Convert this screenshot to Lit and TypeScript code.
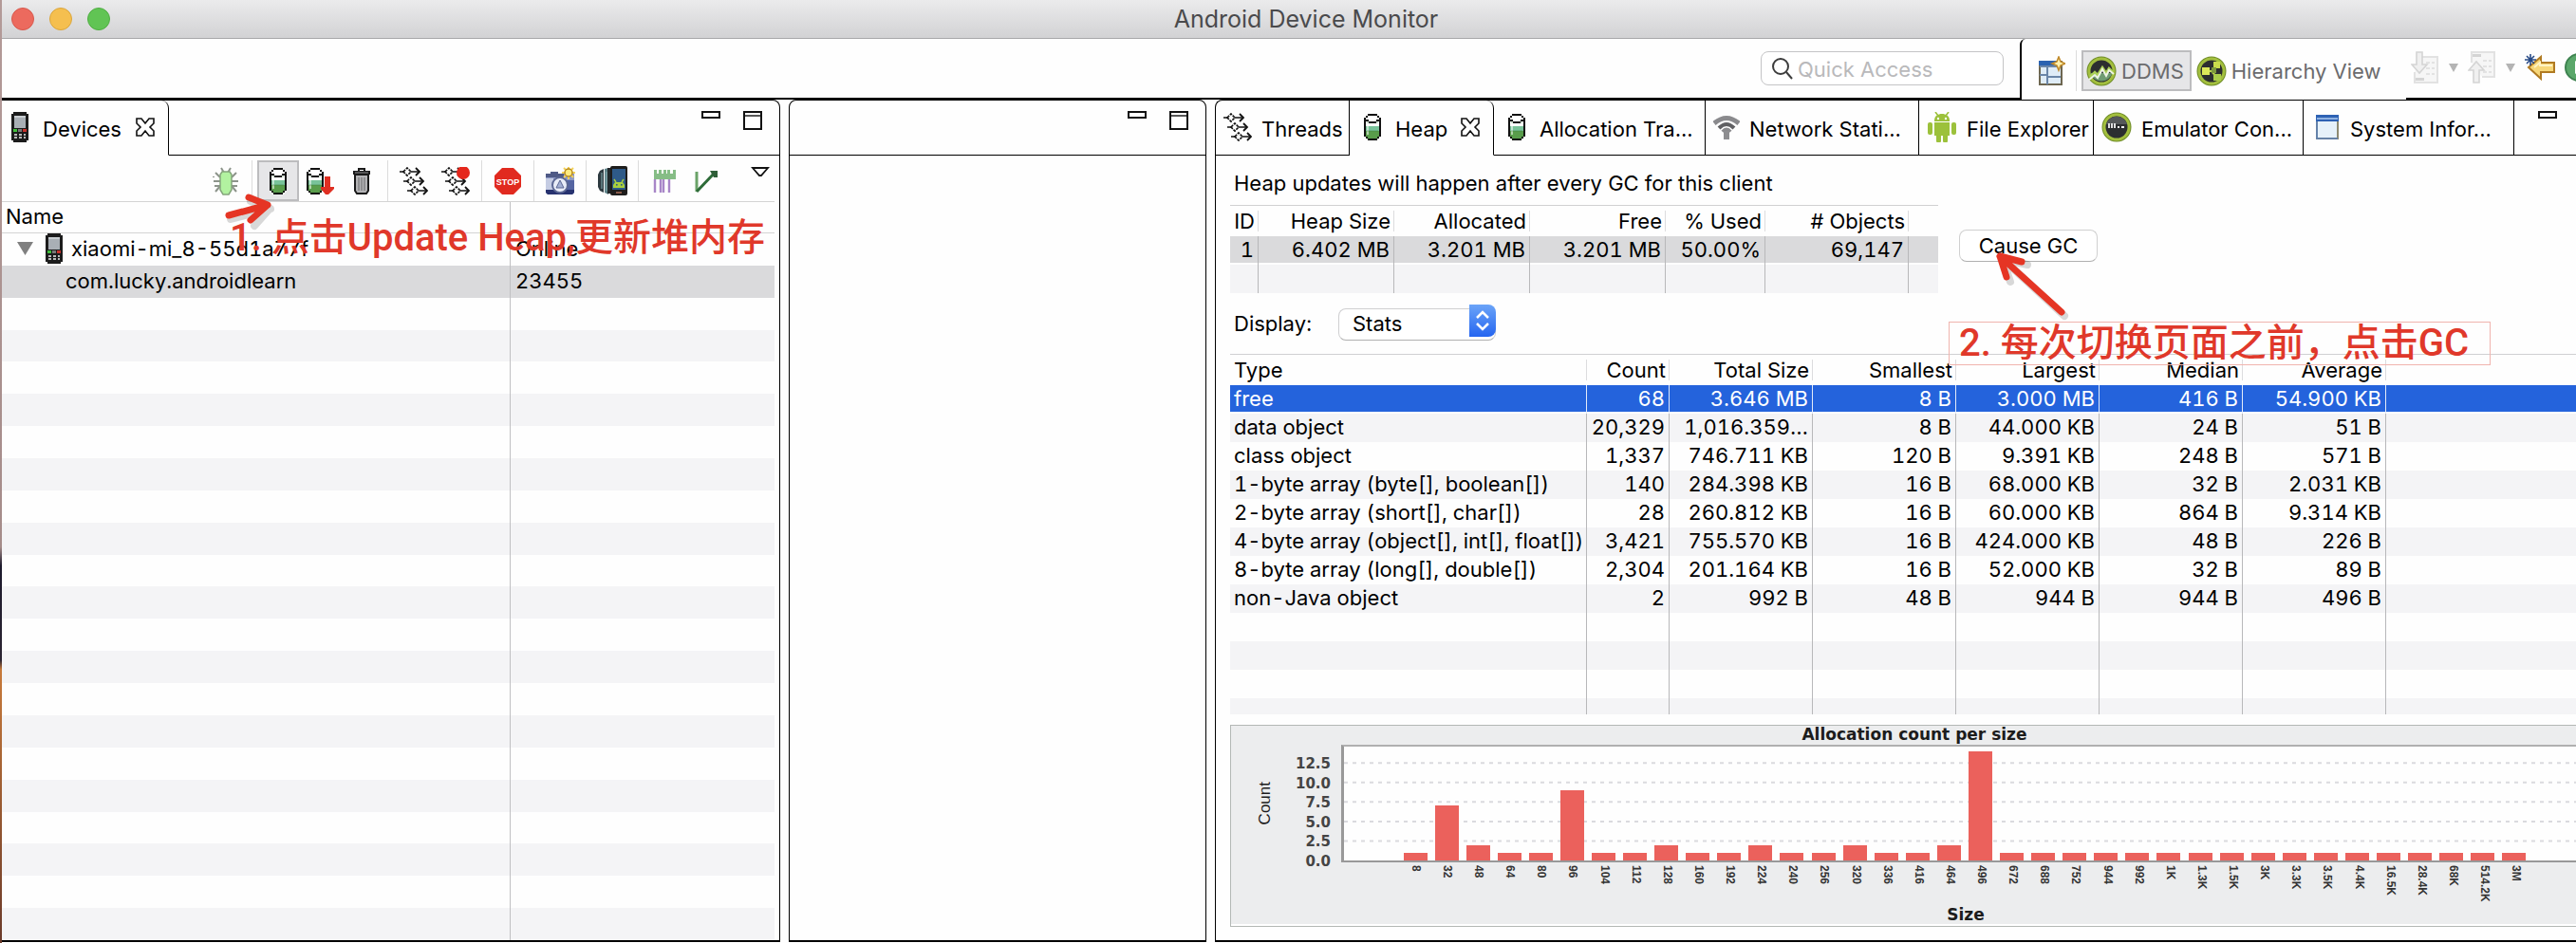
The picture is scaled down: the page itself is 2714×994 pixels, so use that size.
import { LitElement, html, css, svg, nothing } from "lit";
import { customElement } from "lit/decorators.js";
import { classMap } from "lit/directives/class-map.js";

/* ---------- icons ---------- */

const phoneIcon = html`<svg class="ico" width="18" height="32" viewBox="0 0 18 32" aria-hidden="true">
  <path d="M2 0h14v2h2v28h-2v2H2v-2H0V2h2z" fill="#1c1c1c"/>
  <rect x="3" y="4" width="12" height="13" fill="#a9afb5"/>
  <rect x="3" y="4" width="12" height="2" fill="#c9ced2"/>
  <rect x="2" y="18" width="4" height="3" fill="#3fbf3a"/><rect x="7" y="18" width="4" height="3" fill="#777"/>
  <rect x="12" y="18" width="4" height="3" fill="#c8302a"/>
  <path d="M3 23h3v2H3zm5 0h3v2H8zm5 0h2v2h-2zM3 26h3v2H3zm5 0h3v2H8zm5 0h2v2h-2z" fill="#b9b9b9"/>
</svg>`;

const heapShape = svg`
  <path d="M4 2h12l3 3v19l-3 4H4l-3-4V5z" fill="#fff"/>
  <path d="M3 13h14v5H3z" fill="#79c39a"/>
  <path d="M3 18h14v6l-2 3H5l-2-3z" fill="#599d4b"/>
  <path d="M5 5v17" stroke="#fff" stroke-opacity=".55" stroke-width="2"/>
  <path d="M4 9h12M4 18h12" stroke="#3f7d45" stroke-width="1" opacity=".5"/>
  <path d="M5 1h10M3 3h2M15 3h2M2 4v20M18 4v20M3 7h3M14 7h3M6 9h8M3 25h2M15 25h2M5 27h10" stroke="#111" stroke-width="2" fill="none"/>`;

const heapIcon = html`<svg class="ico" width="20" height="28" viewBox="0 0 20 28" aria-hidden="true">${heapShape}</svg>`;

const heapDumpIcon = html`<svg class="ico" width="31" height="28" viewBox="0 0 31 28" aria-hidden="true">${heapShape}
  <path d="M20 9h6v11h4v2l-6 6h-3l-5-6v-2h4z" fill="#df2f22"/></svg>`;

const trashIcon = html`<svg class="ico" width="20" height="28" viewBox="0 0 20 28" aria-hidden="true">
  <path d="M3 7h14v17l-2 3H5l-2-3z" fill="#b4b4b6" stroke="#1a1a1a" stroke-width="2"/>
  <path d="M7 10v14M10 10v14M13 10v14" stroke="#6a6a6c" stroke-width="1"/>
  <path d="M1 5h18" stroke="#1a1a1a" stroke-width="4"/><path d="M3 5h14" stroke="#8f8f90" stroke-width="1"/>
  <path d="M7 3V1h6v2" stroke="#1a1a1a" stroke-width="2" fill="none"/></svg>`;

const threadRow = (x: number, y: number) => svg`
  <path d=${`M${x} ${y}h5M${x + 12} ${y}h8`} stroke="#111" stroke-width="1.6"/>
  <path d=${`M${x + 4} ${y}l4-4 4 4-4 4z`} fill="#fff" stroke="#111" stroke-width="1.6" stroke-dasharray="3 1"/>
  <path d=${`M${x + 17} ${y - 4}l4 4-4 4`} fill="none" stroke="#111" stroke-width="1.8"/>`;

const threadsIcon = html`<svg class="ico" width="30" height="30" viewBox="0 0 30 30" aria-hidden="true">
  ${threadRow(0, 5)}${threadRow(4, 15)}${threadRow(8, 25)}</svg>`;

const threadsRecIcon = html`<svg class="ico" width="30" height="30" viewBox="0 0 30 30" aria-hidden="true">
  ${threadRow(0, 5)}${threadRow(4, 15)}${threadRow(8, 25)}<circle cx="23" cy="6" r="7" fill="#e5271c"/></svg>`;

const bugIcon = html`<svg class="ico" width="28" height="30" viewBox="0 0 28 30" aria-hidden="true">
  <path d="M9 1l3 5M19 1l-3 5M3 6l5 5M25 6l-5 5M1 15h26M3 26l5-6M25 26l-5-6M1 10v1M2 20h6M26 20h-6" stroke="#8d948b" stroke-width="2" fill="none"/>
  <path d="M10 5h8l2 3v16l-3 5h-6l-3-5V8z" fill="#b2f2a0" stroke="#85a57c" stroke-width="1.5"/></svg>`;

const stopIcon = html`<svg class="ico" width="28" height="28" viewBox="0 0 28 28" aria-hidden="true">
  <path d="M8 0h12l8 8v12l-8 8H8l-8-8V8z" fill="#e12a1f"/>
  <text x="14" y="18" text-anchor="middle" font-family="Liberation Sans" font-weight="700" font-size="9" fill="#fff">STOP</text></svg>`;

const cameraIcon = html`<svg class="ico" width="32" height="30" viewBox="0 0 32 30" aria-hidden="true">
  <path d="M1 7h5V5h8v2h17v20l-2 2H3l-2-2z" fill="#8e9ac6"/>
  <path d="M1 7h5V5h8v2h6v4H1z" fill="#4f5a86"/><path d="M1 12h8v12H1z" fill="#c5cce3"/>
  <path d="M1 24h30v3l-2 2H3l-2-2z" fill="#27326f"/><path d="M23 14h8v10h-8z" fill="#5565a2"/>
  <circle cx="16" cy="19" r="8" fill="#e9edf8" stroke="#5c6894" stroke-width="2"/>
  <path d="M16 14l4 8h-8z" fill="#a4b0d4" stroke="#5c6894"/>
  <path d="M25 0v13M18 6h14M20 1l10 10M30 1L20 11" stroke="#f4d35a" stroke-width="2"/>
  <circle cx="25" cy="6" r="4" fill="#ffeb80" stroke="#b88a1e" stroke-width="1.5"/></svg>`;

const phonesIcon = html`<svg class="ico" width="32" height="31" viewBox="0 0 32 31" aria-hidden="true">
  <path d="M3 5l4-2v25l-4-2-2-4V9z" fill="#2d3a40"/><path d="M8 3l4-1v28l-4-2z" fill="#5f8288"/>
  <path d="M11 2h4v27h-4z" fill="#22282b"/><path d="M5 7v17M10 6v20" stroke="#86aeb2" stroke-width="1"/>
  <rect x="14" y="0" width="18" height="31" rx="2" fill="#1e1d1c"/>
  <rect x="16" y="3" width="14" height="22" fill="#2e5a88"/>
  <path d="M17 23v-3l2-3h8l2 3v3z" fill="#a9cf3e"/><path d="M18 14l2 3M28 14l-2 3" stroke="#a9cf3e" stroke-width="1.4"/>
  <rect x="20" y="19" width="1.6" height="1.6" fill="#2e5a88"/><rect x="25" y="19" width="1.6" height="1.6" fill="#2e5a88"/>
  <rect x="20" y="27" width="6" height="2" fill="#8a5a4a"/></svg>`;

const traceIcon = html`<svg class="ico" width="25" height="26" viewBox="0 0 25 26" aria-hidden="true">
  <path d="M1 1h3v4h2V1h3v4h2V1h3v4h1V1h3v4h3V1h3v10H1z" fill="#86bd86"/>
  <path d="M2 11v14M8 11v14M11 11v14M17 11v14" stroke="#a886c8" stroke-width="2.4"/></svg>`;

const tlIcon = html`<svg class="ico" width="25" height="26" viewBox="0 0 25 26" aria-hidden="true">
  <path d="M2 3v21" stroke="#6aa368" stroke-width="3"/><path d="M2 24L21 4" stroke="#2d6b38" stroke-width="3"/>
  <path d="M16 2h8v7h-4z" fill="#2f5f38"/></svg>`;

const closeIcon = html`<svg class="ico" width="20" height="20" viewBox="0 0 20 20" aria-hidden="true">
  <path d="M1 1h5l4 5 4-5h5v5l-4 4 4 4v5h-5l-4-5-4 5H1v-5l4-4-4-4z" fill="#fff" stroke="#111" stroke-width="1.6"/></svg>`;

const minIcon = html`<svg class="ico" width="20" height="8" viewBox="0 0 20 8" aria-hidden="true">
  <rect x="1" y="1" width="18" height="6" fill="#fff" stroke="#111" stroke-width="2"/></svg>`;

const maxIcon = html`<svg class="ico" width="20" height="20" viewBox="0 0 20 20" aria-hidden="true">
  <rect x="1" y="1" width="18" height="18" fill="#fff" stroke="#111" stroke-width="2"/><path d="M2 5h16" stroke="#111" stroke-width="1.4"/></svg>`;

const menuIcon = html`<svg class="ico" width="20" height="11" viewBox="0 0 20 11" aria-hidden="true">
  <path d="M2 1h16l-7 8h-2z" fill="#fff" stroke="#111" stroke-width="1.8"/></svg>`;

const wifiIcon = html`<svg class="ico" width="28" height="28" viewBox="0 0 28 28" aria-hidden="true" fill="none" stroke="#8a8a8d">
  <path d="M1 10Q14-1 27 10" stroke-width="5"/><path d="M6 15Q14 7 22 15" stroke-width="4" stroke="#606063"/>
  <path d="M10 19Q14 14 18 19" stroke-width="4"/><path d="M14 18v9" stroke-width="6" stroke="#8d8d90"/></svg>`;

const androidIcon = html`<svg class="ico" width="32" height="32" viewBox="0 0 32 32" aria-hidden="true">
  <g fill="#9cc13b"><path d="M8 9c0-5 4-7 8-7s8 2 8 7v1H8z"/><path d="M8 11h16v14H8z"/>
  <rect x="1" y="11" width="5" height="13" rx="2"/><rect x="26" y="11" width="5" height="13" rx="2"/>
  <rect x="10" y="24" width="5" height="8" rx="1"/><rect x="17" y="24" width="5" height="8" rx="1"/></g>
  <path d="M9 0l3 4M23 0l-3 4" stroke="#9cc13b" stroke-width="1.6"/>
  <circle cx="12" cy="7" r="1.2" fill="#fff"/><circle cx="20" cy="7" r="1.2" fill="#fff"/></svg>`;

const badge = (inner: unknown) => html`<svg class="ico" width="32" height="32" viewBox="0 0 32 32" aria-hidden="true">
  <circle cx="16" cy="16" r="15.5" fill="#6f8c28"/><circle cx="16" cy="16" r="14.5" fill="#a3bf3e"/>
  <circle cx="16" cy="16" r="11.5" fill="#2c2e30"/>${inner}</svg>`;

const emulatorIcon = badge(svg`<path d="M5 13a11.500 11.500 0 0 1 22 0z" fill="#55585a"/>
  <path d="M8 12v5M11 12v5M14 12v5" stroke="#f2f2f2" stroke-width="1.8"/><path d="M17 16h2M21 16h3" stroke="#f2f2f2" stroke-width="2"/>`);
const ddmsIcon = badge(svg`<path d="M4.500 18h23a12 12 0 0 1-23 0z" fill="#6f9c72"/>
  <path d="M4 22l5-5 3 3 5-8 4 6 3-5 4 4" fill="none" stroke="#a9cf56" stroke-width="2.500"/>
  <path d="M3 25l6-5 3 3 5-9 4 7 3-6 5 4" fill="none" stroke="#eef4e4" stroke-width="2"/>`);
const hierarchyIcon = badge(svg`<path d="M11 16h5M16 16l6-7M16 16l6 7" stroke="#b9d34f" stroke-width="2"/>
  <rect x="6" y="12" width="8" height="8" fill="#dbe85a"/><rect x="18" y="6" width="7" height="7" fill="#c9dc4d"/>
  <rect x="18" y="19" width="8" height="7" fill="#a9cc4a"/><rect x="16" y="12" width="5" height="6" fill="#7d9a3d"/>`);

const windowIcon = html`<svg class="ico" width="24" height="26" viewBox="0 0 24 26" aria-hidden="true">
  <rect x="1" y="1" width="22" height="24" fill="#e6f1fa" stroke="#8d8a72" stroke-width="2"/>
  <rect x="0" y="0" width="24" height="7" fill="#2e62b4"/><rect x="1" y="3" width="22" height="2" fill="#8fb2e2"/>
  <path d="M1 7v18h22" fill="none" stroke="#5b80b8" stroke-width="1.600"/></svg>`;

const newPerspIcon = html`<svg class="ico" width="28" height="32" viewBox="0 0 28 32" aria-hidden="true">
  <rect x="1" y="6" width="23" height="24" fill="#dfecf7" stroke="#6d6650" stroke-width="2"/>
  <rect x="0" y="5" width="18" height="5" fill="#2b62b0"/><path d="M1 11h22M9 11v19M1 20h8M9 22h14" stroke="#6b86a8" stroke-width="2"/>
  <path d="M21 1l2 5 5 2-5 2-2 5-2-5-5-2 5-2z" fill="#fff2b0" stroke="#c08a2a" stroke-width="1.600"/></svg>`;

const sheetDown = html`<svg class="ico" width="30" height="34" viewBox="0 0 30 34" aria-hidden="true">
  <path d="M10 6h18v27H4V22" fill="#f6f6f6" stroke="#e2e2e2" stroke-width="2"/><path d="M16 12h9M16 18h9M16 24h9" stroke="#e2e2e2" stroke-width="2" stroke-dasharray="4 2"/>
  <rect x="5" y="28" width="9" height="3" fill="#d4d4d4"/>
  <path d="M6 1h6v13h5l-8 9-8-9h5z" fill="#f0f0f0" stroke="#d4d4d4" stroke-width="1.600"/></svg>`;
const sheetUp = html`<svg class="ico" width="30" height="34" viewBox="0 0 30 34" aria-hidden="true">
  <path d="M4 12V1h24v26H15" fill="#f6f6f6" stroke="#e2e2e2" stroke-width="2"/><path d="M16 10h9M16 16h9M16 22h9" stroke="#e2e2e2" stroke-width="2" stroke-dasharray="4 2"/>
  <rect x="5" y="3" width="9" height="3" fill="#d4d4d4"/>
  <path d="M6 33h6V20h5l-8-9-8 9h5z" fill="#f0f0f0" stroke="#d4d4d4" stroke-width="1.600"/></svg>`;
const dropIcon = html`<svg class="ico" width="10" height="9" viewBox="0 0 10 9" aria-hidden="true"><path d="M0 0h10L5 9z" fill="#b4b4b4"/></svg>`;
const backIcon = html`<svg class="ico" width="32" height="28" viewBox="0 0 32 28" aria-hidden="true">
  <path d="M4 14L17 3v6h14v10H17v7z" fill="#f7d77a" stroke="#b07a22" stroke-width="2"/><path d="M10 14l6-5v3h13" fill="none" stroke="#fff3c4" stroke-width="2"/>
  <path d="M6 0v12M0 6h12M2 2l8 8M10 2l-8 8" stroke="#274a86" stroke-width="1.600"/></svg>`;
const runIcon = html`<svg class="ico" width="30" height="30" viewBox="0 0 30 30" aria-hidden="true">
  <circle cx="15" cy="15" r="14" fill="#5aa76a" stroke="#3e8350" stroke-width="2"/><path d="M11 8l11 7-11 7z" fill="#fff"/></svg>`;
const searchIcon = html`<svg class="ico" width="22" height="24" viewBox="0 0 22 24" aria-hidden="true" fill="none" stroke="#3c3c3c" stroke-width="2">
  <circle cx="9" cy="10" r="8"/><path d="M15 16l6 7"/></svg>`;

/* ---------- data ---------- */

const statRows = [
  ["free", "68", "3.646 MB", "8 B", "3.000 MB", "416 B", "54.900 KB"],
  ["data object", "20,329", "1,016.359…", "8 B", "44.000 KB", "24 B", "51 B"],
  ["class object", "1,337", "746.711 KB", "120 B", "9.391 KB", "248 B", "571 B"],
  ["1-byte array (byte[], boolean[])", "140", "284.398 KB", "16 B", "68.000 KB", "32 B", "2.031 KB"],
  ["2-byte array (short[], char[])", "28", "260.812 KB", "16 B", "60.000 KB", "864 B", "9.314 KB"],
  ["4-byte array (object[], int[], float[])", "3,421", "755.570 KB", "16 B", "424.000 KB", "48 B", "226 B"],
  ["8-byte array (long[], double[])", "2,304", "201.164 KB", "16 B", "52.000 KB", "32 B", "89 B"],
  ["non-Java object", "2", "992 B", "48 B", "944 B", "944 B", "496 B"],
];

const sizes: [string, number][] = [
  ["8", 1], ["32", 7], ["48", 2], ["64", 1], ["80", 1], ["96", 9], ["104", 1], ["112", 1], ["128", 2],
  ["160", 1], ["192", 1], ["224", 2], ["240", 1], ["256", 1], ["320", 2], ["336", 1], ["416", 1], ["464", 2],
  ["496", 14], ["672", 1], ["688", 1], ["752", 1], ["944", 1], ["992", 1], ["1K", 1], ["1.3K", 1], ["1.5K", 1],
  ["3K", 1], ["3.3K", 1], ["3.5K", 1], ["4.4K", 1], ["16.5K", 1], ["28.4K", 1], ["68K", 1], ["514.2K", 1], ["3M", 1],
];
const axisMax = 14.6;

const shared = css`
  * { box-sizing: border-box; }
  .ico { display: block; flex: none; }
  button { font: inherit; color: inherit; background: none; border: 0; padding: 0; margin: 0; }
  .panel {
    position: relative; height: 100%; min-width: 0; display: flex; flex-direction: column;
    background: #fefefe; border: 1px solid #000; border-bottom-width: 2px;
    border-radius: 8px 8px 0 0;
  }
  .tab {
    display: flex; align-items: center; text-align: left; white-space: nowrap;
    border-right: 1px solid #000; border-bottom: 1px solid #000;
  }
  .tab .cap { padding-top: 4px; }
  .tab.active { border-bottom-color: transparent; border-top-right-radius: 8px; }
  .tail { display: flex; align-items: flex-start; border-bottom: 1px solid #000; }
`;

/* ---------- allocation chart ---------- */

@customElement("allocation-chart")
export class AllocationChart extends LitElement {
  static styles = css`
    :host { display: block; }
    .chart {
      display: grid; grid-template-columns: 68px 48px 1fr 8px; grid-template-rows: 20px 124px 45px 22px;
      width: calc(100% + 22px); border: 1px solid #b3b8b5; background: #ecedee;
      font-family: "DejaVu Sans", sans-serif; color: #1c1c1c; box-shadow: inset 0 -2px 0 #fff;
    }
    .title { grid-column: 1 / -1; margin: 0; text-align: center; font-size: 17px; line-height: 18px; font-weight: 700; }
    .ylabel {
      grid-row: 2; grid-column: 1; justify-self: center; align-self: center; writing-mode: vertical-rl;
      transform: rotate(180deg); font-family: "Liberation Sans", sans-serif; font-size: 17px; line-height: 18px;
      margin-left: 4px;
    }
    .ticks {
      grid-row: 2; grid-column: 2; height: 123px; margin-top: 10px; display: flex; flex-direction: column;
      justify-content: space-between; font-size: 15px; line-height: 20px; font-weight: 700; color: #444;
      text-align: right; padding-right: 11px;
    }
    .plot {
      grid-row: 2; grid-column: 3; position: relative; background: #fefefe; border: 2px solid #b0b0b0;
      border-left: 3px solid #999; border-bottom-color: #999;
    }
    .lines { position: absolute; inset: 0; width: 100%; height: 100%; }
    .line { stroke: #dadade; stroke-width: 2; stroke-dasharray: 4 5; }
    .bars { position: relative; height: 100%; margin-left: -3px; padding: 0 5%; display: flex; align-items: flex-end; justify-content: space-between; }
    .bar { width: 25px; background: #eb615c; }
    .cats { grid-row: 3; grid-column: 3; padding: 3px 5% 0; display: flex; justify-content: space-between; }
    .cat {
      width: 25px; line-height: 25px; writing-mode: vertical-rl; font-family: "Liberation Sans", sans-serif;
      font-size: 12px; font-weight: 700; color: #333; white-space: nowrap;
    }
    .xlabel { grid-row: 4; grid-column: 3; text-align: center; font-size: 17px; line-height: 20px; font-weight: 700; }
  `;
  render() {
    return html`<div class="chart">
      <h2 class="title">Allocation count per size</h2>
      <div class="ylabel">Count</div>
      <div class="ticks">${["12.5", "10.0", "7.5", "5.0", "2.5", "0.0"].map((t) => html`<span>${t}</span>`)}</div>
      <div class="plot">
        <svg class="lines" aria-hidden="true">
          ${[2.5, 5, 7.5, 10, 12.5].map((v) => {
            const y = `${100 - (v / axisMax) * 100}%`;
            return svg`<line class="line" x1="0" x2="100%" y1=${y} y2=${y}></line>`;
          })}
        </svg>
        <div class="bars">
          ${sizes.map(([, n]) => html`<div class="bar" style="height:${(n / axisMax) * 100}%"></div>`)}
        </div>
      </div>
      <div class="cats">${sizes.map(([s]) => html`<span class="cat">${s}</span>`)}</div>
      <div class="xlabel">Size</div>
    </div>`;
  }
}

/* ---------- devices ---------- */

@customElement("devices-panel")
export class DevicesPanel extends LitElement {
  static styles = [shared, css`
    :host { display: block; min-width: 0; min-height: 0; }
    .panel { border-left: 0; border-top-left-radius: 0; }
    .tabs { flex: none; height: 58px; display: grid; grid-template-columns: 176px 1fr; }
    .tab { padding: 0 0 2px 10px; gap: 15px; }
    .tail { justify-content: flex-end; gap: 24px; padding: 11px 18px 0 0; }
    .tools {
      flex: none; height: 49px; margin-right: 5px; padding-top: 5px; display: flex; justify-content: flex-end;
      border-bottom: 1px solid #d4d4d4;
    }
    .tool { height: 43px; width: 44px; display: flex; align-items: center; justify-content: center; }
    .tool.on { background: #e6e6e8; border: 2px solid #bcbcbe; }
    .sep { width: 1px; background: #dcdcdc; margin: 0 5px; }
    .menu { align-self: flex-start; height: 24px; margin: 0 2px 0 22px; width: 26px; }
    .tree {
      flex: 1; min-height: 0; margin-right: 5px; display: grid; grid-template-rows: 33px repeat(22, minmax(0, 1fr));
      font-size: 22px; line-height: 28px; font-variant-numeric: tabular-nums;
    }
    .tree thead, .tree tbody { display: contents; }
    .tree tr { display: grid; grid-template-columns: 536px 1fr; }
    .tree th, .tree td {
      display: flex; align-items: center; padding: 0 0 2px 4px; font-weight: 400; text-align: left; white-space: nowrap; min-width: 0;
    }
    .tree th:first-child, .tree td:first-child { border-right: 1px solid #c0c0c2; }
    .tree thead tr { border-bottom: 1px solid #d4d4d4; }
    .tree tbody tr:nth-child(even) { background: #f4f4f6; }
    .tree tbody tr.sel { background: #dadadc; }
    .tree td:last-child { padding-left: 5px; }
    .tree .device { padding-left: 16px; }
    .tree .app { padding-left: 67px; }
    .twist { margin-right: 13px; }
    .name { margin-left: 9px; }
    .note { position: absolute; left: 240px; top: 117px; font-size: 40px; line-height: 56px; color: #e0382a; white-space: nowrap; margin: 0;
      font-weight: 500; font-family: Roboto, "Noto Sans CJK SC", sans-serif; }
    .arrow { position: absolute; left: 224px; top: 92px; }
  `];
  render() {
    const tool = (label: string, icon: unknown, on = false) =>
      html`<button class=${classMap({ tool: true, on })} aria-label=${label}>${icon}</button>`;
    const sep = html`<span class="sep"></span>`;
    return html`<section class="panel">
      <div class="tabs">
        <button class="tab active">${phoneIcon}<span class="cap">Devices</span>${closeIcon}</button>
        <div class="tail"><button aria-label="Minimize">${minIcon}</button><button aria-label="Maximize">${maxIcon}</button></div>
      </div>
      <div class="tools">
        ${tool("Debug", bugIcon)}${sep}
        ${tool("Update Heap", heapIcon, true)}${tool("Dump HPROF file", heapDumpIcon)}${tool("Cause GC", trashIcon)}${sep}
        ${tool("Update Threads", threadsIcon)}${tool("Start Method Profiling", threadsRecIcon)}${sep}
        ${tool("Stop Process", stopIcon)}${sep}
        ${tool("Screen Capture", cameraIcon)}${sep}
        ${tool("Dump View Hierarchy", phonesIcon)}${sep}
        ${tool("Systrace", traceIcon)}${tool("OpenGL Trace", tlIcon)}
        <button class="tool menu" aria-label="View Menu">${menuIcon}</button>
      </div>
      <table class="tree">
        <thead><tr><th>Name</th><th></th></tr></thead>
        <tbody>
          <tr><td class="device">
            <svg class="ico twist" width="17" height="14" viewBox="0 0 17 14" aria-hidden="true"><path d="M0 0h17L8.500 14z" fill="#808080"/></svg>
            ${phoneIcon}<span class="name">xiaomi-mi_8-55d1a77f</span></td><td>Online</td></tr>
          <tr class="sel"><td class="app">com.lucky.androidlearn</td><td>23455</td></tr>
          ${Array.from({ length: 20 }, () => html`<tr><td></td><td></td></tr>`)}
        </tbody>
      </table>
      <svg class="arrow" width="64" height="54" viewBox="0 0 64 54" aria-hidden="true">
        <g fill="none" stroke-linecap="round" stroke-linejoin="round">
          <path d="M17 33l42-11M38 14l20 8-16 18" stroke="#000" stroke-opacity=".15" stroke-width="8"/>
          <path d="M15 29l41-11M36 10l20 8-18 16" stroke="#e53524" stroke-width="7"/>
        </g></svg>
      <p class="note">1. 点击Update Heap,更新堆内存</p>
    </section>`;
  }
}

/* ---------- heap view ---------- */

@customElement("heap-panel")
export class HeapPanel extends LitElement {
  static styles = [shared, css`
    :host { display: block; min-width: 0; min-height: 0; overflow: hidden; }
    .panel { border-right: 0; border-top-right-radius: 0; }
    .tabs { flex: none; height: 58px; display: grid; grid-template-columns: 141px 152px 223px 225px 184px 221px 222px 1fr; }
    .tab { padding: 0 0 2px 8px; gap: 10px; }
    .tab.active, .tab.roomy { padding-left: 14px; gap: 14px; }
    .tab.wide { padding-left: 13px; gap: 12px; }
    .tail { padding: 11px 0 0 25px; }
    .body { flex: 1; min-height: 0; display: flex; flex-direction: column; padding: 0 0 14px 15px; }
    .info { flex: none; height: 52px; margin: 0; padding: 6px 0 0 4px; line-height: 46px; }
    .top { flex: none; display: flex; align-items: flex-start; gap: 22px; }
    table { border-collapse: separate; border-spacing: 0; table-layout: fixed; border-top: 1px solid #d0d0d2; font-variant-numeric: tabular-nums; }
    th, td { padding: 0 4px 0 0; font-weight: 400; text-align: right; white-space: nowrap; overflow: hidden; line-height: 28px; vertical-align: top; }
    th { height: 32px; padding-top: 2px; background: linear-gradient(#dcdcde, #dcdcde) right 5px / 1px 22px no-repeat; }
    td { height: 30px; border-right: 1px solid #b8b8ba; }
    th:last-child, td:last-child { border-right: 0; background-image: none; }
    .mem { width: 746px; font-size: 22px; }
    .mem .sel td, .mem .sel td:last-child { background: linear-gradient(#dadadc, #dadadc) 0 0 / 100% 28px no-repeat; }
    .mem .alt { background: #f4f4f6; }
    .c30 { width: 30px; } .c143 { width: 143px; } .c105 { width: 105px; } .c151 { width: 151px; }
    .c376 { width: 376px; } .c87 { width: 87px; }
    .gc {
      width: 146px; height: 34px; margin-top: 26px; border: 1px solid #d0d0d0; border-bottom-color: #b0b0b0;
      border-radius: 8px; background: #fff; line-height: 32px; text-align: center;
    }
    .display { flex: none; height: 64px; padding: 12px 0 0 4px; display: grid; grid-template-columns: 110px 166px; line-height: 40px; }
    .pick { position: relative; height: 34px; }
    .pick select {
      appearance: none; width: 100%; height: 100%; border: 1px solid #cfcfd1; border-bottom-color: #b0b0b0; border-radius: 8px;
      background: #fff; color: #000; font: inherit; line-height: 28px; padding: 0 40px 2px 14px;
    }
    .knob { position: absolute; right: 0; top: 0; pointer-events: none; }
    .scroll { flex: 1; min-height: 0; overflow: hidden; }
    .stats { width: 100%; font-size: 22px; }
    .stats th:first-child, .stats td:first-child { text-align: left; padding-left: 4px; }
    .stats tbody tr:nth-child(even) { background: #f4f4f6; }
    .stats .sel td, .stats .sel td:last-child { color: #fff; background: linear-gradient(#2463dc, #2463dc) 0 0 / 100% 28px no-repeat; border-right-color: #e4ebf8; }
    .graph { flex: none; margin-top: 11px; }
    .note {
      position: absolute; left: 772px; top: 233px; margin: 0; padding: 0 22px 0 10px; border: 1px solid #f0b4ae; height: 46px; line-height: 44px;
      font-size: 40px; font-weight: 500; color: #e0382a; white-space: nowrap; font-family: Roboto, "Noto Sans CJK SC", sans-serif;
    }
    .arrow { position: absolute; left: 815px; top: 153px; }
  `];
  render() {
    const heads = ["Type", "Count", "Total Size", "Smallest", "Largest", "Median", "Average", ""];
    const blank = Array.from({ length: 5 }, () => html`<tr>${heads.map(() => html`<td></td>`)}</tr>`);
    return html`<section class="panel">
      <div class="tabs">
        <button class="tab">${threadsIcon}<span class="cap">Threads</span></button>
        <button class="tab active">${heapIcon}<span class="cap">Heap</span>${closeIcon}</button>
        <button class="tab roomy">${heapIcon}<span class="cap">Allocation Tra...</span></button>
        <button class="tab">${wifiIcon}<span class="cap">Network Stati...</span></button>
        <button class="tab">${androidIcon}<span class="cap">File Explorer</span></button>
        <button class="tab">${emulatorIcon}<span class="cap">Emulator Con...</span></button>
        <button class="tab wide">${windowIcon}<span class="cap">System Infor...</span></button>
        <div class="tail"><button aria-label="Minimize">${minIcon}</button></div>
      </div>
      <div class="body">
        <p class="info">Heap updates will happen after every GC for this client</p>
        <div class="top">
          <table class="mem">
            <colgroup><col class="c30"><col class="c143"><col class="c143"><col class="c143"><col class="c105"><col class="c151"><col></colgroup>
            <thead><tr><th>ID</th><th>Heap Size</th><th>Allocated</th><th>Free</th><th>% Used</th><th># Objects</th><th></th></tr></thead>
            <tbody>
              <tr class="sel"><td>1</td><td>6.402 MB</td><td>3.201 MB</td><td>3.201 MB</td><td>50.00%</td><td>69,147</td><td></td></tr>
              <tr class="alt">${Array.from({ length: 7 }, () => html`<td></td>`)}</tr>
            </tbody>
          </table>
          <button class="gc">Cause GC</button>
        </div>
        <div class="display">
          <label for="display">Display:</label>
          <div class="pick">
            <select id="display"><option>Stats</option></select>
            <svg class="knob" width="28" height="34" viewBox="0 0 28 34" aria-hidden="true">
              <defs><linearGradient id="blue" x1="0" y1="0" x2="0" y2="1"><stop offset="0" stop-color="#6ba4f8"/><stop offset="1" stop-color="#2565f0"/></linearGradient></defs>
              <path d="M0 0h20a8 8 0 0 1 8 8v18a8 8 0 0 1-8 8H0z" fill="url(#blue)"/>
              <path d="M8 14l6-6 6 6M8 20l6 6 6-6" fill="none" stroke="#fff" stroke-width="2.500"/></svg>
          </div>
        </div>
        <div class="scroll">
          <table class="stats">
            <colgroup><col class="c376"><col class="c87"><col class="c151"><col class="c151"><col class="c151"><col class="c151"><col class="c151"><col></colgroup>
            <thead><tr>${heads.map((h) => html`<th>${h || nothing}</th>`)}</tr></thead>
            <tbody>
              ${statRows.map((r, i) => html`<tr class=${classMap({ sel: i === 0 })}>${r.map((c) => html`<td>${c}</td>`)}<td></td></tr>`)}
              ${blank}
            </tbody>
          </table>
        </div>
        <allocation-chart class="graph"></allocation-chart>
      </div>
      <svg class="arrow" width="90" height="80" viewBox="0 0 90 80" aria-hidden="true">
        <g fill="none" stroke-linecap="round" stroke-linejoin="round">
          <path d="M79 74L14 14M40 20L14 14l8 24" stroke="#000" stroke-opacity=".15" stroke-width="8"/>
          <path d="M76 70L11 11M34 17L11 11l7 22" stroke="#e53524" stroke-width="7"/>
        </g></svg>
      <p class="note">2. 每次切换页面之前，点击GC</p>
    </section>`;
  }
}

/* ---------- window ---------- */

@customElement("app-root")
export class AppRoot extends LitElement {
  static styles = [shared, css`
    :host {
      display: grid; grid-template-rows: 41px 64px minmax(0, 1fr); height: 100vh; padding: 0 0 1px 2px; box-sizing: border-box; overflow: hidden;
      color: #000; font: 22px/28px Inter, "Noto Sans CJK SC", sans-serif;
      background: linear-gradient(#b39a98, #a58c8a 58%, #1c1a2c 60%, #2b2432 70%, #c77a3a 71%, #6a3a2a) 0 0 / 2px 100% no-repeat, #fefefe;
    }
    .titlebar {
      display: grid; grid-template-columns: 200px 1fr 164px; align-items: center;
      background: linear-gradient(#ebebec, #d2d2d4); border-bottom: 1px solid #a8a8aa;
    }
    .lights { display: flex; gap: 16px; padding-left: 10px; }
    .light { width: 24px; height: 24px; border-radius: 50%; }
    .red { background: #ec6a5e; border: 1px solid #d8584c; }
    .yellow { background: #f5bf4f; border: 1px solid #dba63c; }
    .green { background: #61c454; border: 1px solid #4fae42; }
    .title { margin: 0; font-size: 25px; line-height: 30px; font-weight: 400; color: #4a4a4c; text-align: center; }
    .bar { display: grid; grid-template-columns: 1fr 407px 179px; }
    .quick { display: flex; justify-content: flex-end; padding: 13px 17px 0 0; border-bottom: 2px solid #000; }
    .search { width: 256px; height: 36px; border: 1px solid #c4c4c6; border-radius: 8px; background: #fff; display: flex; align-items: center; gap: 5px; padding: 0 10px 0 11px; }
    .search input { flex: 1; min-width: 0; border: 0; outline: 0; padding: 2px 0 0; background: none; font: inherit; }
    .search input::placeholder { color: #b9b9bb; opacity: 1; }
    .persp { border-left: 2px solid #000; border-top-left-radius: 6px; padding: 12px 0 0 18px; display: flex; color: #6b6b6d; }
    .new { height: 43px; display: flex; align-items: center; }
    .psep { width: 1px; height: 43px; background: #dcdcdc; margin: 0 5px 0 11px; }
    .p { height: 43px; display: flex; align-items: center; gap: 5px; padding: 0 5px; white-space: nowrap; }
    .p.on { background: #e6e6e8; border: 2px solid #bcbcbe; padding: 0 6px 0 3px; }
    .extra { display: flex; align-items: center; gap: 10px; padding: 0 0 2px 5px; border-bottom: 2px solid #000; overflow: hidden; }
    .panes { display: grid; grid-template-columns: 820fr 440fr 1434fr; gap: 9px; min-height: 0; }
    .empty .tail { flex: none; height: 58px; justify-content: flex-end; gap: 24px; padding: 11px 18px 0 0; }
  `];
  render() {
    return html`
      <header class="titlebar">
        <div class="lights"><span class="light red"></span><span class="light yellow"></span><span class="light green"></span></div>
        <h1 class="title">Android Device Monitor</h1>
      </header>
      <div class="bar">
        <div class="quick"><label class="search">${searchIcon}<input type="text" placeholder="Quick Access" aria-label="Quick Access"></label></div>
        <div class="persp">
          <button class="new" aria-label="Open Perspective">${newPerspIcon}</button><span class="psep"></span>
          <button class="p on">${ddmsIcon}<span>DDMS</span></button>
          <button class="p">${hierarchyIcon}<span>Hierarchy View</span></button>
        </div>
        <div class="extra">
          <button aria-label="Next Annotation">${sheetDown}</button><button aria-label="Next Annotation Menu">${dropIcon}</button>
          <button aria-label="Previous Annotation">${sheetUp}</button><button aria-label="Previous Annotation Menu">${dropIcon}</button>
          <button aria-label="Last Edit Location">${backIcon}</button><button aria-label="Run">${runIcon}</button>
        </div>
      </div>
      <main class="panes">
        <devices-panel></devices-panel>
        <section class="panel empty"><div class="tail"><button aria-label="Minimize">${minIcon}</button><button aria-label="Maximize">${maxIcon}</button></div></section>
        <heap-panel></heap-panel>
      </main>`;
  }
}
